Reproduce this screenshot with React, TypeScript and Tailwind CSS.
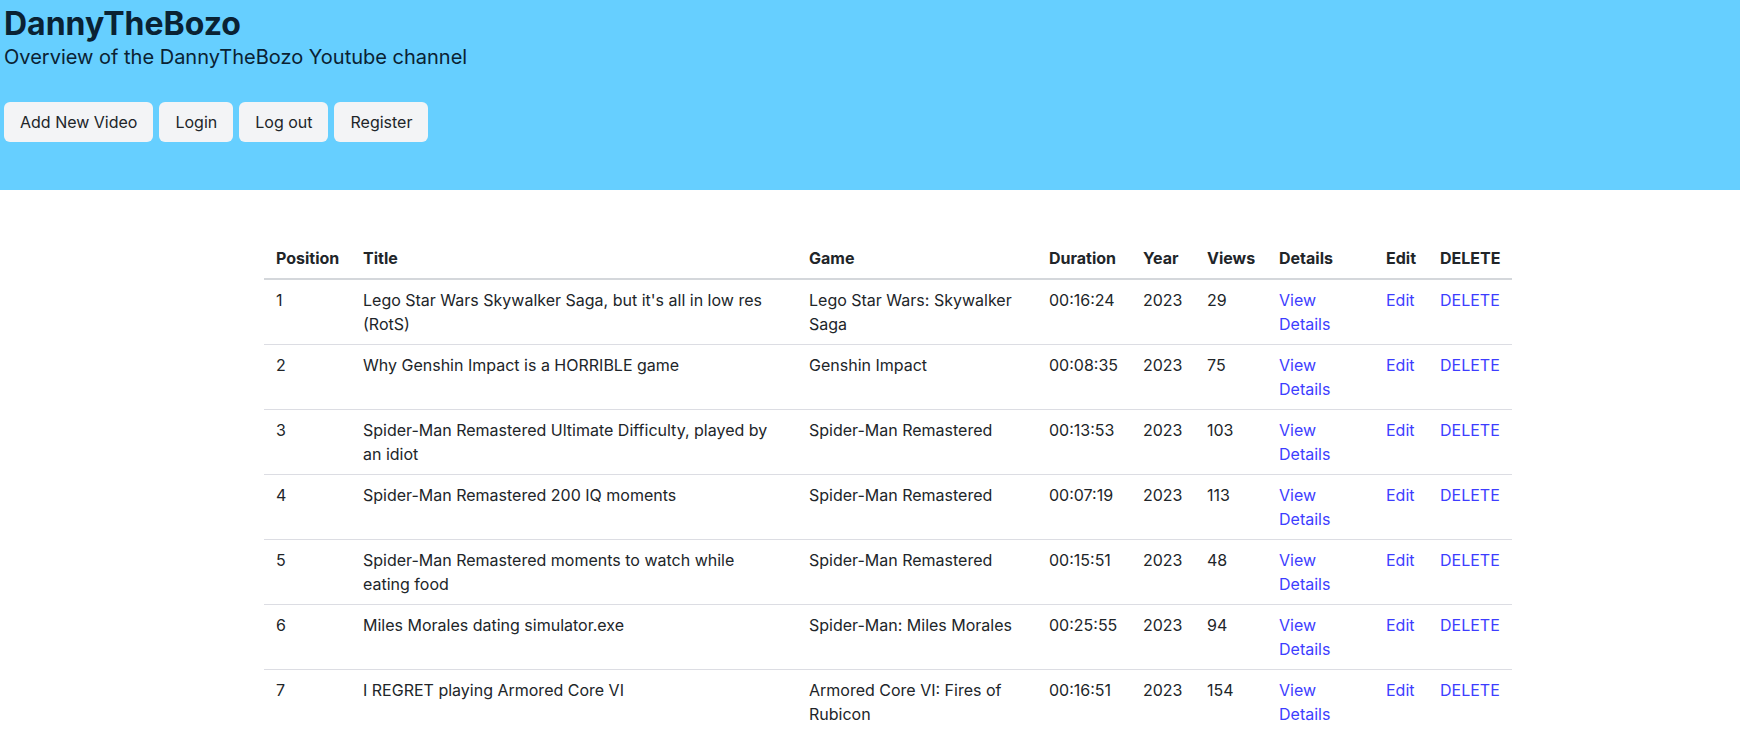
import React from "react";

type Video = {
  pos: number;
  title: string;
  game: string;
  duration: string;
  year: number;
  views: number;
};

const videos: Video[] = [
  { pos: 1, title: "Lego Star Wars Skywalker Saga, but it's all in low res (RotS)", game: "Lego Star Wars: Skywalker Saga", duration: "00:16:24", year: 2023, views: 29 },
  { pos: 2, title: "Why Genshin Impact is a HORRIBLE game", game: "Genshin Impact", duration: "00:08:35", year: 2023, views: 75 },
  { pos: 3, title: "Spider-Man Remastered Ultimate Difficulty, played by an idiot", game: "Spider-Man Remastered", duration: "00:13:53", year: 2023, views: 103 },
  { pos: 4, title: "Spider-Man Remastered 200 IQ moments", game: "Spider-Man Remastered", duration: "00:07:19", year: 2023, views: 113 },
  { pos: 5, title: "Spider-Man Remastered moments to watch while eating food", game: "Spider-Man Remastered", duration: "00:15:51", year: 2023, views: 48 },
  { pos: 6, title: "Miles Morales dating simulator.exe", game: "Spider-Man: Miles Morales", duration: "00:25:55", year: 2023, views: 94 },
  { pos: 7, title: "I REGRET playing Armored Core VI", game: "Armored Core VI: Fires of Rubicon", duration: "00:16:51", year: 2023, views: 154 },
];

const btn =
  "bg-[#f3f4f6] text-[#212529] rounded-md px-4 py-2 text-base leading-6";

export default function App() {
  return (
    <div className="min-h-screen bg-white text-[#212529]" style={{ fontFamily: "Inter, 'Noto Sans', sans-serif" }}>
      <header className="bg-[#66cfff] h-[190px] px-1 pt-[5px]">
        <h1 className="text-[32px] leading-[38px] font-bold text-[#0a2233]">DannyTheBozo</h1>
        <p className="text-[20px] leading-[28px] text-[#0a2233]">Overview of the DannyTheBozo Youtube channel</p>
        <div className="flex gap-[6px] mt-[31px]">
          <button className={btn}>Add New Video</button>
          <button className={btn}>Login</button>
          <button className={btn}>Log out</button>
          <button className={btn}>Register</button>
        </div>
      </header>
      <main className="pt-12 pl-[264px]">
        <table className="w-[1248px] table-fixed border-collapse text-base leading-6">
          <colgroup>
            <col className="w-[87px]" />
            <col className="w-[446px]" />
            <col className="w-[240px]" />
            <col className="w-[94px]" />
            <col className="w-[64px]" />
            <col className="w-[72px]" />
            <col className="w-[107px]" />
            <col className="w-[54px]" />
            <col className="w-[84px]" />
          </colgroup>
          <thead>
            <tr className="border-b-2 border-[#d4d7db]">
              {["Position", "Title", "Game", "Duration", "Year", "Views", "Details", "Edit", "DELETE"].map((h) => (
                <th key={h} className="text-left font-bold px-3 py-2 align-bottom">{h}</th>
              ))}
            </tr>
          </thead>
          <tbody>
            {videos.map((v) => (
              <tr key={v.pos} className="border-b border-[#dcdde3]">
                <td className="px-3 py-2 align-top">{v.pos}</td>
                <td className="px-3 py-2 align-top">{v.title}</td>
                <td className="px-3 py-2 align-top">{v.game}</td>
                <td className="px-3 py-2 align-top">{v.duration}</td>
                <td className="px-3 py-2 align-top">{v.year}</td>
                <td className="px-3 py-2 align-top">{v.views}</td>
                <td className="px-3 py-2 align-top"><a href="#" className="text-[#3d3dff]">View Details</a></td>
                <td className="px-3 py-2 align-top"><a href="#" className="text-[#3d3dff]">Edit</a></td>
                <td className="px-3 py-2 align-top"><a href="#" className="text-[#3d3dff]">DELETE</a></td>
              </tr>
            ))}
          </tbody>
        </table>
      </main>
    </div>
  );
}
